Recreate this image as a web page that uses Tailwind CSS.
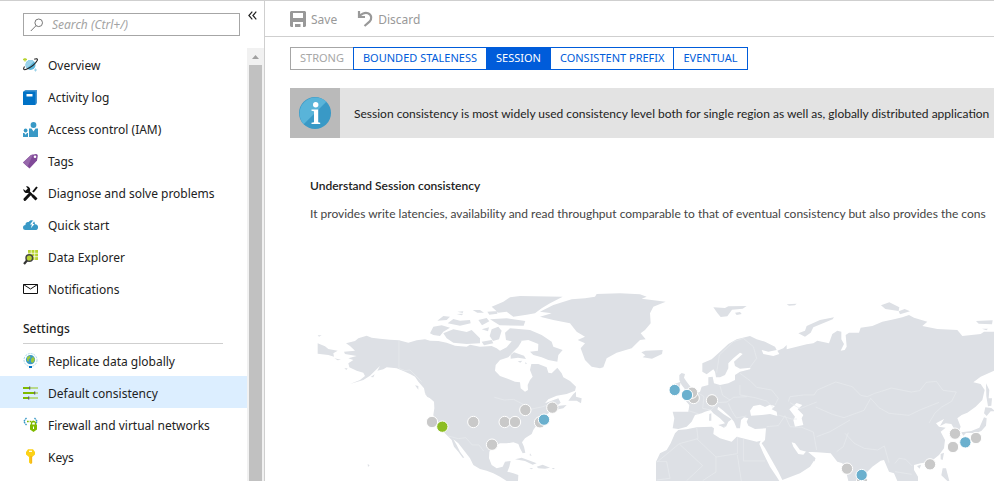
<!DOCTYPE html>
<html lang="en">
<head>
<meta charset="utf-8">
<meta name="viewport" content="width=device-width, initial-scale=1">
<title>Default consistency</title>
<script src="https://cdn.jsdelivr.net/npm/@tailwindcss/browser@4"></script>
</head>
<body class="flex h-screen overflow-hidden border-t border-[#cfcfcf] bg-white font-['Noto_Sans',sans-serif] text-xs text-[#222]">

<aside class="flex w-[265px] shrink-0 flex-col border-r border-[#cfcfcf]">
  <div class="flex h-[47px] shrink-0 items-start pl-[23px] pt-3">
    <label class="flex h-[23px] w-[217px] items-center gap-2 border border-[#a6a6a6] pl-1.5">
      <svg class="size-[14px] shrink-0" viewBox="0 0 14 14" fill="none" stroke="#777" aria-hidden="true"><circle cx="8.700" cy="4.800" r="3.800"/><path d="M6 7.700.8 13"/></svg>
      <input type="search" aria-label="Search" placeholder="Search (Ctrl+/)" class="w-full min-w-0 italic outline-none placeholder:text-[#a3a3a3]">
    </label>
    <button type="button" aria-label="Collapse menu" class="ml-2 -mt-2 h-5">
      <svg class="h-[9px] w-[9px]" viewBox="0 0 9 9" fill="none" stroke="#222" stroke-width="1.200"><path d="M4.300.7.900 4.500l3.400 3.800M8.300.7 4.900 4.500l3.400 3.800"/></svg>
    </button>
  </div>
  <div class="flex min-h-0 flex-1">
    <nav class="min-w-0 flex-1 overflow-hidden pt-px">
      <ul>
        <li><a href="#" class="flex h-8 items-center gap-2.5 pl-[23px]">
          <svg class="size-[15px] shrink-0" viewBox="0 0 15 15"><circle cx="7.500" cy="7" r="5" fill="#59b4d9"/><path d="M4 3.500a5 5 0 0 1 7 0L4 10.500a5 5 0 0 1 0-7" fill="#9bd3ea"/><path d="M1.500 8.500C-.3 11.500.8 12.500 4 11S12.500 5.500 14.200 2.500c.8-2-1-2-3-1.200" fill="none" stroke="#222" stroke-width="1.100"/><path d="M2 0v3.500M0 1.500h4" stroke="#b8d432" stroke-width="1.300"/><path d="M12.500 10.500v3M11 12h3" stroke="#9bd3ea"/></svg><span class="pt-0.5">Overview</span></a></li>
        <li><a href="#" class="flex h-8 items-center gap-2.5 pl-[23px]">
          <svg class="size-[15px] shrink-0" viewBox="0 0 15 15"><path d="M1 1 2.500 0H14v13l-1 1.500H1z" fill="#4896cf"/><path d="M0 1.500h12.500V15H0z" fill="#0072c6"/><path d="M3.500 4h6v2.500h-6z" fill="#fff"/></svg><span class="pt-0.5">Activity log</span></a></li>
        <li><a href="#" class="flex h-8 items-center gap-2.5 pl-[23px]">
          <svg class="size-[15px] shrink-0" viewBox="0 0 15 15" fill="#3999c6"><circle cx="10.500" cy="3" r="2.900"/><path d="M6 6.500h2.500l2 3 2-3H15V15H6z"/><circle cx="2.600" cy="8.500" r="1.900"/><path d="M0 11h1.300l1.300 1.800L4 11h1v4H0z"/></svg><span class="pt-0.5">Access control (IAM)</span></a></li>
        <li><a href="#" class="flex h-8 items-center gap-2.5 pl-[23px]">
          <svg class="size-[15px] shrink-0" viewBox="0 0 15 15"><path d="M0 8.500 8 1l5-.9q1.700 0 1.800 1.600L14 6.500l-7.500 8Z" fill="#804998"/><path d="M0 8.500 8 1l2-.4L4.500 12.700Z" fill="#9768ab"/><circle cx="12" cy="2.800" r="1.300" fill="#fff"/></svg><span class="pt-0.5">Tags</span></a></li>
        <li><a href="#" class="flex h-8 items-center gap-2.5 pl-[23px]">
          <svg class="size-[15px] shrink-0" viewBox="0 0 15 15"><path d="M5 5l8.300 8.300M10 6l4-5" fill="none" stroke="#111" stroke-width="2"/><path d="M7 8 2 13.300" stroke="#111" stroke-width="3" stroke-linecap="round"/><path d="M3 .4a3.500 3.500 0 0 1 4 4.500L5 6.900A3.600 3.600 0 0 1 .4 3L2.500 4.800 4.800 2.600Z" fill="#111"/><path d="M9.500 9.500l4 4" stroke="#111" stroke-width="2.800"/></svg><span class="pt-0.5">Diagnose and solve problems</span></a></li>
        <li><a href="#" class="flex h-8 items-center gap-2.5 pl-[23px]">
          <svg class="size-[15px] shrink-0" viewBox="0 0 15 15"><path d="M2.500 12a2.500 2.500 0 0 1 0-5C2.300 4.500 4 3.500 5.700 4 7.500 1.200 12 2 12 6.300c4-.3 4 5.700.3 5.700Z" fill="#3999c6"/><path d="m10 2.500-3 4h2L7.800 10.300 11.500 6h-2L11.500 2.500Z" fill="#fff"/></svg><span class="pt-0.5">Quick start</span></a></li>
        <li><a href="#" class="flex h-8 items-center gap-2.5 pl-[23px]">
          <svg class="size-[15px] shrink-0" viewBox="0 0 15 15"><path d="M5 0h10v10H5z" fill="#b8d432"/><path d="M8.200 0v10M11.700 0v10M5 3.300h10M5 6.700h10" stroke="#fff" stroke-width=".7"/><circle cx="6.300" cy="8" r="3.300" fill="#b8d432" stroke="#444" stroke-width="1.500"/><path d="m4 10.500-3 3.500" stroke="#333" stroke-width="2.200"/></svg><span class="pt-0.5">Data Explorer</span></a></li>
        <li><a href="#" class="flex h-8 items-center gap-2.5 pl-[23px]">
          <svg class="size-[15px] shrink-0" viewBox="0 0 15 15" fill="none" stroke="#111"><path d="M.5 2.500h14v9H.5z"/><path d="m.5 2.500 7 4.500 7-4.500"/></svg><span class="pt-0.5">Notifications</span></a></li>
      </ul>
      <h2 class="ml-[23px] mr-6 mt-3 h-[27px] border-b border-[#cfcfcf] pt-1 font-medium">Settings</h2>
      <ul>
        <li><a href="#" class="flex h-8 items-center gap-2.5 pl-[23px]">
          <svg class="size-[15px] shrink-0" viewBox="0 0 15 15"><circle cx="7.500" cy="7" r="6.500" fill="none" stroke="#a9d9ea" stroke-dasharray="2 1"/><circle cx="7.500" cy="6.700" r="4.600" fill="#3999c6"/><path d="M4 4.200 7 2.500 7.500 5 5.500 6.500 6 8.500 4 8ZM8 6l2-2.500 2 3-2 3.500-2-1Z" fill="#9bc83c"/><path d="M6 13h3v2H6z" fill="#0072c6"/></svg><span class="pt-1">Replicate data globally</span></a></li>
        <li class="bg-[#dceeff]"><a href="#" aria-current="page" class="flex h-8 items-center gap-2.5 pl-[23px]">
          <svg class="size-[15px] shrink-0" viewBox="0 0 15 15"><path d="M0 2h7v2H0zM0 7h11v2H0zM0 12h6v2H0z" fill="#7fba00"/><path d="M7 2h8v2H7zM11 7h4v2h-4zM6 12h9v2H6z" fill="#b8d98a"/><path d="M6 1.500h1.300v3H6zM11 6.500h1.300v3H11zM5 11.500h1.300v3H5z" fill="#666"/></svg><span class="pt-1">Default consistency</span></a></li>
        <li><a href="#" class="flex h-8 items-center gap-2.5 pl-[23px]">
          <svg class="size-[15px] shrink-0" viewBox="0 0 15 15"><path d="M3.500.8.800 4.500l2.700 3.700M11.500.8l2.700 3.700-1.500 2" fill="none" stroke="#3999c6" stroke-width="1.300" stroke-dasharray="2 .5"/><path d="M4 4.500h7" stroke="#7fba00" stroke-width="1.700" stroke-dasharray="1.700 1"/><path d="M8.500 8V6.500a2 2 0 0 1 4 0V8" fill="none" stroke="#7fba00" stroke-width="1.300"/><path d="M7 7.500h7v5L10.500 15 7 12.500Z" fill="#7fba00"/><path d="M10 9.500h1V12h-1z" fill="#fff"/></svg><span class="pt-1">Firewall and virtual networks</span></a></li>
        <li><a href="#" class="flex h-8 items-center gap-2.5 pl-[23px]">
          <svg class="size-[15px] shrink-0" viewBox="0 0 15 15"><path d="M5 .3h5L12 3v2.500L9.200 8v6L7.800 15 6 13.500V8L3 5.500V3Z" fill="#fcd116"/><path d="M7.500 7h1.200v7l-.9 1Z" fill="#f3a71c"/><path d="M6 1.700h3v1.200H6z" fill="#fff"/></svg><span class="pt-1">Keys</span></a></li>
      </ul>
    </nav>
    <div class="flex w-[17px] flex-col items-center bg-[#f1f1f1]" aria-hidden="true">
      <svg class="h-[17px] w-[17px] shrink-0" viewBox="0 0 17 17"><path d="M5 11h7L8.500 7Z" fill="#a0a0a0"/></svg>
      <div class="w-[13px] flex-1 bg-[#c1c1c1]"></div>
    </div>
  </div>
</aside>

<main class="flex min-w-0 flex-1 flex-col">
  <div class="flex h-9 shrink-0 items-center gap-5 border-b border-[#cfcfcf] pl-[25px] text-[#999]">
    <button type="button" class="flex items-center gap-[5px]">
      <svg class="size-4" viewBox="0 0 16 16"><path fill="#999" fill-rule="evenodd" d="M1 0h14l1 1v14l-1 1H1l-1-1V1ZM3 2v5h10V2Z"/><path d="M3 11h10v5h-2.500v-3H8v3H3z" fill="#fff"/><path d="M5 13h3v3H5z" fill="#999"/></svg><span class="pt-0.5">Save</span></button>
    <button type="button" class="flex items-center gap-[5px]">
      <svg class="size-4" viewBox="0 0 16 16" fill="none" stroke="#999" stroke-width="2.200"><path d="M2 0v6h6M2 6C4 2.500 8 1.200 11 2.200c4 1.600 4 6 1.500 8.500L7.500 15"/></svg><span class="pt-0.5">Discard</span></button>
  </div>

  <div class="ml-[25px] mt-2.5 flex h-[23px] shrink-0 text-[11px] text-[#005cda]" role="group" aria-label="Consistency level">
    <button type="button" disabled class="border border-r-0 border-[#a6a6a6] px-[9px] text-[#a6a6a6]">STRONG</button>
    <button type="button" class="border border-[#005cda] px-[9px]">BOUNDED STALENESS</button>
    <button type="button" aria-pressed="true" class="bg-[#005cda] px-[9px] text-white">SESSION</button>
    <button type="button" class="border border-[#005cda] px-[9px]">CONSISTENT PREFIX</button>
    <button type="button" class="border border-l-0 border-[#005cda] px-[9px]">EVENTUAL</button>
  </div>

  <div class="ml-[25px] mt-[18px] flex h-[50px] shrink-0 items-center overflow-hidden bg-[#e3e3e3] font-[Lato,sans-serif]">
    <div class="flex size-[50px] shrink-0 items-center justify-center bg-[#bababa]">
      <svg class="size-8" viewBox="0 0 32 32"><circle cx="16" cy="16" r="16" fill="#3999c6"/><path d="M4.700 27.300A16 16 0 0 1 27.300 4.700Z" fill="#59b4d9"/><circle cx="16.700" cy="7.800" r="2.700" fill="#fff"/><path d="M12.500 12.500h6.700v12.700l2 .5V27h-8.700v-1.300l2.500-.5V14.300l-2.500-.5Z" fill="#fff"/></svg>
    </div>
    <p class="whitespace-nowrap pl-3.5 pt-0.5">Session consistency is most widely used consistency level both for single region as well as, globally distributed application</p>
  </div>

  <section class="ml-[45px] mt-10 shrink-0 overflow-hidden whitespace-nowrap font-[Lato,sans-serif]">
    <h1 class="font-semibold leading-4">Understand Session consistency</h1>
    <p class="mt-3 leading-4 text-[#444]">It provides write latencies, availability and read throughput comparable to that of eventual consistency but also provides the cons</p>
  </section>

  <div class="ml-[25px] mt-[58px] shrink-0">
  <svg class="w-full" viewBox="0 0 2112 603" role="img" aria-label="Map of regions">
    <g fill="#dde0e5">
      <!-- North America -->
      <g transform="translate(30 0)">
        <path d="M138 190 165 183 175 175 200 167 215 173 240 176 270 179 297 181 325 188 350 181 375 178 390 182 415 183 440 188 465 197 500 200 510 194 540 200 575 198 590 205 600 212 620 202 635 184 650 180 665 184 655 200 640 215 625 232 600 240 587 255 585 272 600 288 625 297 645 305 660 307 662 325 675 335 684 330 683 315 690 300 698 290 690 270 694 252 715 252 740 262 745 278 755 280 772 263 785 280 790 292 810 303 828 320 825 332 800 342 770 347 745 358 735 370 755 362 775 355 782 368 770 378 800 375 790 385 765 390 745 400 735 408 725 430 710 435 700 450 695 462 675 475 666 487 672 500 676 518 668 520 660 505 655 492 640 487 620 490 600 490 580 500 568 515 567 535 575 555 590 565 608 560 615 545 632 543 628 560 622 575 640 580 655 585 654 603H620L600 590 580 580 560 572 540 567 520 555 510 535 495 515 475 490 460 478 470 495 480 515 493 533 488 533 475 515 462 500 455 480 440 465 425 450 405 425 400 405 403 385 402 365 385 350 375 340 372 325 355 305 345 290 330 282 310 273 290 265 260 262 250 268 232 272 240 258 225 272 210 287 190 300 150 312 180 300 195 288 190 278 170 272 148 262 145 250 160 240 145 235 170 228 135 222 132 215 165 212 150 198Z"/>
        <path d="M53 190 75 199 85 207 113 212 100 220 102 230 85 225 53 221ZM53 166l12 0-8 4ZM103 235l20 4-10 2ZM133 265l10 0-4 5ZM212 291l12-8-4 9ZM345 316l10 2 0 11ZM375 341l20 6 15 8 2 13-12-10-18-7ZM180 541l6 2M203 552l6 4-5 5ZM192 545l8 3ZM390 160 400 140 425 136 450 143 430 155 420 168 400 165ZM430 160 460 148 500 156 515 150 540 175 540 190 500 192 460 188 440 175ZM412 122 430 108 450 110 440 120ZM443 130 460 117 480 122 510 120 512 130 480 137ZM472 95l18-1-2 5ZM470 102l20-1-5 5ZM518 90l22 0 12 8-20 0ZM535 120l25-6 8 10-22 12ZM562 95l30-2 0 8-24 3ZM575 80 610 65 630 52 660 48 788 50 750 70 725 85 705 100 680 104 640 110 620 95 595 98ZM570 118l50-3 56 8-5 14-72-1ZM575 148l20-8 10 12-8 26-18 5-10-15ZM545 148l22-6-3 12ZM545 185l30-5 5 10-28 6ZM615 158 630 145 665 148 690 150 725 165 755 185 760 200 788 210 775 225 772 245 745 240 725 232 700 225 690 215 714 212 715 192 685 180 640 185 618 180ZM632 225l10-8 30 10 6 10-24-4-22 3ZM653 244l14-2-6 6ZM675 247l6 3-4 3ZM805 362 820 342 828 335 828 350 845 355 843 370 830 362ZM645 538 665 533 690 542 710 550 698 554 675 543ZM710 560 728 554 750 563 735 566 715 565ZM688 564l12 1-6 3ZM755 564l10 0-5 4ZM684 510l10 3M690 520l5 8-6-2Z"/>
        <!-- Greenland and Iceland -->
        <path d="M720 95 760 75 815 58 855 55 885 50 890 42 960 40 1020 43 1040 50 1025 56 1097 65 1060 80 1050 100 1052 130 1035 150 1022 160 1037 178 1020 180 1010 190 995 205 950 218 920 235 910 262 900 265 875 260 855 240 842 205 855 190 833 180 855 170 830 155 810 130 760 120 720 110 755 100ZM1024 217l12-5 52-2-2 12-30 14-28-4 8-6Z"/>
      </g>
      <!-- Europe, Asia and Africa -->
      <g transform="translate(1050 0)">
        <path d="M98 445 103 415 98 395 145 395 148 375 135 360 150 350 180 335 185 320 205 315 205 292 218 290 222 310 240 315 265 310 285 300 285 285 300 275 330 268 332 263 300 266 285 258 282 245 308 222 300 218 280 235 265 250 265 265 255 285 240 292 228 292 225 275 220 268 200 283 187 275 187 250 215 238 240 215 265 192 290 178 330 168 350 178 375 185 405 200 410 210 385 215 365 210 370 222 400 228 418 222 412 212 430 205 440 195 440 208 470 200 500 193 520 190 532 182 567 190 577 162 592 152 604 155 604 178 612 192 602 212 614 210 620 200 617 165 627 158H657L662 143 697 138 727 125 762 118 787 112 807 105 822 113 862 125 847 138 892 147 952 150 967 168 1022 162 1032 155H1070V272H1062L1022 290 1000 307 1022 312 1034 330 1027 360 1007 380 982 398 965 405 952 415 962 440 957 452 945 450 934 432 917 430 900 438 912 417 888 430 897 440 917 443 902 455 915 480 912 505 897 525 872 545 842 550 822 555 822 570 834 590V603H772L762 580 747 575 732 540 722 542 697 560 667 590 650 603H625L617 570 607 550 592 545 572 520 532 517 500 515 480 510 465 490 455 487 460 500 475 522 490 524 500 512 527 535 510 560 480 580 427 600 415 575 395 540 375 505 365 490 375 480 378 445 345 447 325 437 320 425 325 415 312 412 303 420 300 445 290 445 282 425 270 410 250 392 235 380 232 388 250 402 275 418 265 425 258 440 235 436 255 430 240 415 220 400 212 390 195 395 185 400 165 405 155 425 140 440 115 447Z"/>
        <path d="M115 450 140 448 170 442 215 440 222 445 220 462 240 475 275 485 290 470 320 478 350 485 362 482 358 492 370 520 390 560 410 590 418 603H48V545L60 520 80 510 92 490 105 460ZM118 285 125 279 135 282 132 293 140 305 155 325 150 335 122 342 135 328 125 315 118 300ZM103 312 122 305 118 330 100 335ZM208 402l6-2 0 22-7 0ZM235 434l20 0-2 10ZM220 82l35 2 10-5 55-1-12 8-32 3-14 20-20 2-10-12ZM285 98l15-2 5 6-15 3ZM440 73l30-2-5 5-18 1ZM475 160 495 152 500 138 540 120 582 112 578 118 520 142 512 158 495 170ZM723 76l25-9 30 15-2 11-40-6ZM776 94l18-7 16 7-30 9ZM1008 123l50-2-2 12-40-2ZM1026 146l18 0-5 5ZM1038 310l10 20-2 25 10 0-2 22-10 2-5-30ZM1036 382l18 2 12 10-14 0-12 14-8-8ZM1032 412l8 3-2 22-14 16-16 6-30 0-8 8-6-10 30-4 24-10ZM902 522l10-4-4 22-6-2ZM908 565l10 0 10 38h-6l-18-17ZM831 558l12-4-4 12ZM522 535l4 4-4 6Z"/>
      </g>
    </g>
    <g fill="#fff" transform="translate(1050 0)">
      <path d="M340 378 330 392 333 407 365 405 390 402 412 408 410 395 395 388 405 378 390 374 375 381 360 374ZM448 388 470 369 487 375 473 388 490 405 485 415 490 435 465 440 460 420 465 410Z"/>
    </g>
    <!-- Borders -->
    <g fill="none" stroke="#e9ebee" stroke-width="2">
      <path d="M327 181V265L345 272 360 270 395 305M613 352l30 8 28-2 38 20 12 10 38-8 20-8M475 468l30 8 22-3 20 22 20 0 14 18"/>
      <path transform="translate(1050 0)" d="M230 278 238 225 280 185 310 175 340 200 350 235 330 262M145 392l32 10M170 335l22 15-4 35 25 5 20-22 28-2 20-14 40-2M240 318l8 28 22 14M300 315v30l45 8 35 10 22 22M300 280l30 22 20 20 45 8 20 25-10 20M265 370l10 22 14 22 30-6M445 365l5-15 40-5 32 0 10-15 55-24 50 14 25 26 20 4 22-10 20-6 30-10 60 12 25-4 20-25 30-3 20 27 40 5-14 28-30 17-20 18-18 30M692 355l25 28 30 17 60 6 35-17 55-22M692 355l-20 36-60 22-35-10-50-22M450 368l30 18 50-20M415 405l40 12 16 0M380 440l35-3 20-30 15 33 35 2 35 14 10 54M530 470l40-15 60-35M590 515l20-15 15-42M615 460l28 30 30 15 40 5 20-12 14 50M765 550l12-15 20 3 20 20M765 575l50 8M170 442l4 34-56 15-68 56M118 492l70 65-48 45M170 476l58 55 64-10V470M310 475v68h65M228 531v45l-40 26M292 525l12 78M50 545h30l10 50-40 5"/>
    </g>
    <!-- Region markers -->
    <g stroke="#fff" stroke-width="3" fill="#c9c9c9">
      <circle cx="426" cy="426" r="17"/><circle cx="550" cy="426" r="17"/><circle cx="644" cy="426" r="17"/><circle cx="675" cy="426" r="17"/><circle cx="706" cy="390" r="17"/><circle cx="787" cy="383" r="17"/><circle cx="750" cy="427" r="17"/><circle cx="606" cy="494" r="17"/>
      <circle cx="1211" cy="354" r="17"/><circle cx="1206" cy="338" r="17"/><circle cx="1266" cy="361" r="17"/>
      <circle cx="1671" cy="566" r="17"/><circle cx="1716" cy="605" r="17"/><circle cx="1920" cy="553" r="17"/><circle cx="1989" cy="501" r="17"/><circle cx="1995" cy="461" r="17"/><circle cx="2058" cy="474" r="17"/>
      <circle cx="457" cy="440" r="17" fill="#8cbd22"/>
      <g fill="#6bb0ce"><circle cx="762" cy="419" r="17"/><circle cx="1154" cy="330" r="17"/><circle cx="1191" cy="345" r="17"/><circle cx="1715" cy="585" r="17"/><circle cx="2026" cy="487" r="17"/></g>
    </g>
  </svg>
  </div>
</main>
</body>
</html>
